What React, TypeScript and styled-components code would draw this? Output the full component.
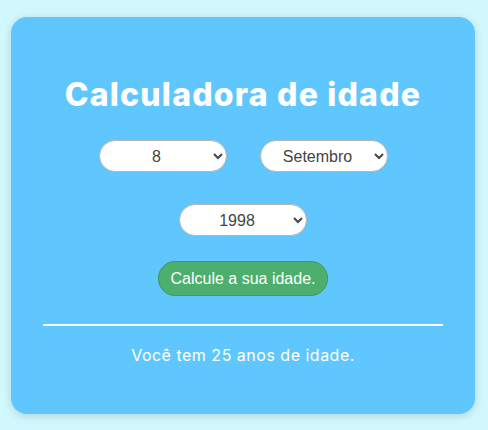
import React from "react";
import styled, { createGlobalStyle } from "styled-components";

const Global = createGlobalStyle`
  html, body { margin: 0; padding: 0; }
  body { background: #d0f8fd; font-family: "Inter", "Open Sans", sans-serif; }
`;

const Page = styled.div`
  padding: 17px 13px 16px 11px;
`;

const Card = styled.div`
  background: #5fc7fe;
  border-radius: 16px;
  box-shadow: 0 2px 8px rgba(0, 0, 0, 0.15);
  height: 397px;
  box-sizing: border-box;
  padding: 58px 32px 0;
  display: flex;
  flex-direction: column;
  align-items: center;
`;

const Title = styled.h1`
  margin: 0;
  color: #fff;
  font-family: "Inter", sans-serif;
  font-weight: 800;
  font-size: 32px;
  line-height: 40px;
  letter-spacing: 1.2px;
`;

const Row = styled.div`
  display: flex;
  gap: 33px;
  justify-content: center;
  margin-top: ${(p: { $mt: number }) => p.$mt}px;
`;

const Select = styled.select`
  width: 128px;
  height: 32px;
  border-radius: 16px;
  border: 1px solid #b5b5b5;
  background: #fff;
  color: #444;
  font-family: "Liberation Sans", Arial, sans-serif;
  font-size: 16px;
  text-align: center;
  padding: 0 8px;
  box-sizing: border-box;
`;

const Button = styled.button`
  margin-top: 25px;
  width: 170px;
  height: 35px;
  border-radius: 17px;
  border: 1px solid #3e9a5c;
  background: #4caf6e;
  color: #fff;
  font-family: "Liberation Sans", Arial, sans-serif;
  font-size: 16px;
  cursor: pointer;
`;

const Divider = styled.hr`
  width: 400px;
  border: none;
  height: 2px;
  background: #fff;
  margin: 28px 0 0;
`;

const Result = styled.p`
  margin: 18px 0 0;
  color: #fff;
  font-family: "Inter", sans-serif;
  font-size: 16px;
  line-height: 22px;
  letter-spacing: 0.5px;
`;

const days = Array.from({ length: 31 }, (_, i) => i + 1);
const months = [
  "Janeiro", "Fevereiro", "Março", "Abril", "Maio", "Junho",
  "Julho", "Agosto", "Setembro", "Outubro", "Novembro", "Dezembro",
];
const years = Array.from({ length: 100 }, (_, i) => 2023 - i);

export default function App() {
  return (
    <>
      <Global />
      <Page>
        <Card>
          <Title>Calculadora de idade</Title>
          <Row $mt={25}>
            <Select defaultValue="8">
              {days.map((d) => (
                <option key={d} value={String(d)}>{d}</option>
              ))}
            </Select>
            <Select defaultValue="Setembro">
              {months.map((m) => (
                <option key={m} value={m}>{m}</option>
              ))}
            </Select>
          </Row>
          <Row $mt={32}>
            <Select defaultValue="1998">
              {years.map((y) => (
                <option key={y} value={String(y)}>{y}</option>
              ))}
            </Select>
          </Row>
          <Button>Calcule a sua idade.</Button>
          <Divider />
          <Result>Você tem 25 anos de idade.</Result>
        </Card>
      </Page>
    </>
  );
}
